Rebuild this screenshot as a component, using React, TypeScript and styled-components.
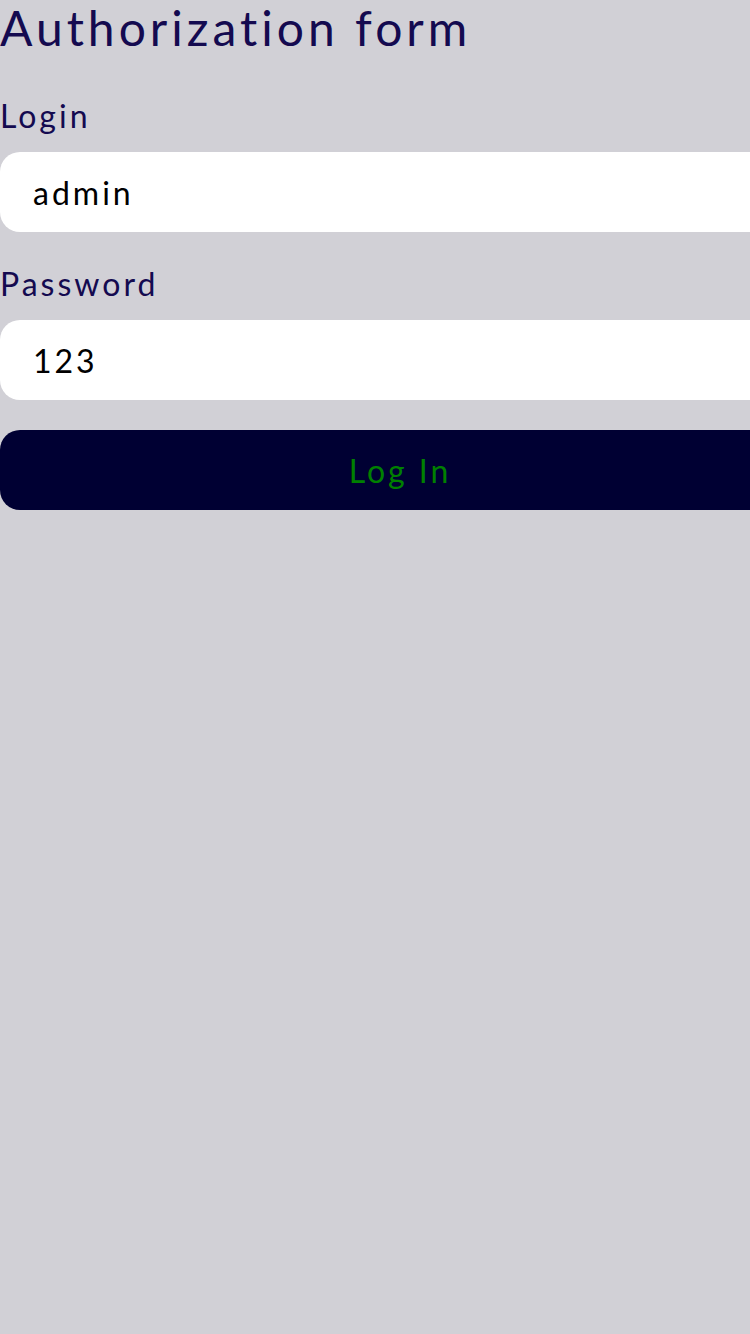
import React from "react";
import styled, { createGlobalStyle } from "styled-components";

const Global = createGlobalStyle`
  html, body { margin: 0; padding: 0; background: #d1d0d6; overflow-x: hidden; }
  body { font-family: "Lato", "Noto Sans", sans-serif; min-height: 1334px; }
`;

const Form = styled.form`
  width: 800px;
  display: flex;
  flex-direction: column;
`;

const Title = styled.h1`
  margin: 0 0 40px;
  font-size: 48px;
  line-height: 56px;
  font-weight: 400;
  color: #140a50;
  letter-spacing: 4px;
`;

const Field = styled.div`
  display: flex;
  flex-direction: column;
  gap: 16px;
  margin-bottom: 32px;
`;

const Label = styled.label`
  font-size: 32px;
  line-height: 40px;
  color: #140a50;
  letter-spacing: 3px;
`;

const Input = styled.input`
  box-sizing: border-box;
  height: 80px;
  width: 100%;
  border: none;
  outline: none;
  border-radius: 20px;
  background: #ffffff;
  padding: 0 33px;
  font-family: inherit;
  font-size: 32px;
  color: #000;
  letter-spacing: 3px;
`;

const Button = styled.button`
  height: 80px;
  width: 100%;
  margin-top: -2px;
  border: none;
  border-radius: 20px;
  background: #000033;
  color: #008000;
  font-family: inherit;
  font-size: 32px;
  letter-spacing: 3px;
`;

export default function App() {
  return (
    <>
      <Global />
      <Form onSubmit={(e) => e.preventDefault()}>
        <Title>Authorization form</Title>
        <Field>
          <Label htmlFor="login">Login</Label>
          <Input id="login" defaultValue="admin" />
        </Field>
        <Field>
          <Label htmlFor="password">Password</Label>
          <Input id="password" defaultValue="123" />
        </Field>
        <Button type="submit">Log In</Button>
      </Form>
    </>
  );
}
